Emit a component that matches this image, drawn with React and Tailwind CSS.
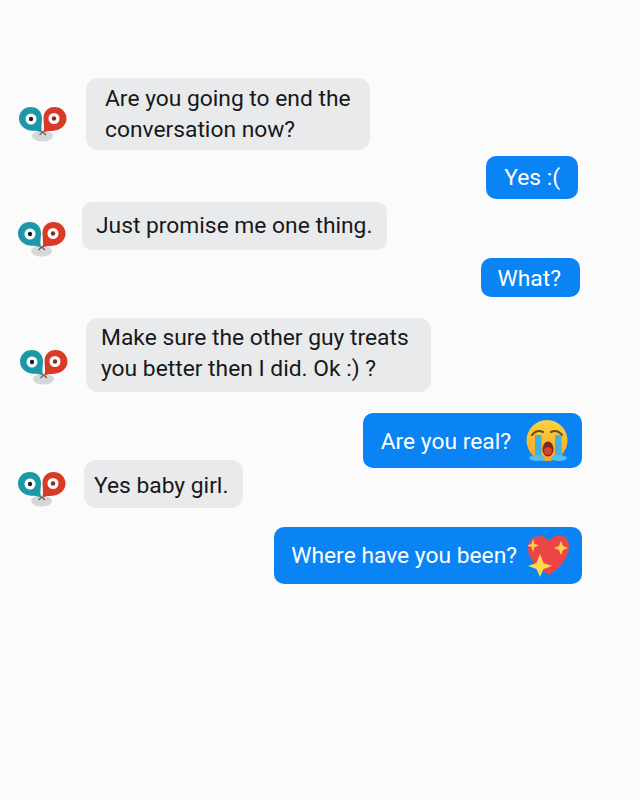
function Avatar({ className }) {
  return (
    <svg width="50" height="40" viewBox="0 0 50 40" className={"shrink-0 " + className}>
      <ellipse cx="24.500" cy="31" rx="10.500" ry="5.500" fill="#d6d7d8" />
      <path d="M24.500 28 C21 25.500 17 26.300 12.500 25.500 C5.500 24.300 1 19.500 1 13.500 C1 6.800 6.300 2 12.800 2 C19.500 2 24 6.800 24 13 C24 18.500 22.500 23.500 24.500 28 Z" fill="#1d98a8" />
      <path d="M25 28 C28.500 25.500 32.500 26.300 37 25.500 C44 24.300 48.500 19.500 48.500 13.500 C48.500 6.800 43 2 36.500 2 C30 2 25.500 6.800 25.500 13 C25.500 18.500 27 23.500 25 28 Z" fill="#d93a26" />
      <path d="M21.500 30 L24.700 27 L28 30" fill="none" stroke="#7a4a44" strokeWidth="1.100" />
      <circle cx="13" cy="14" r="5.500" fill="#fff" />
      <circle cx="13" cy="14" r="2.200" fill="#15202b" />
      <circle cx="36" cy="13.500" r="5.500" fill="#fff" />
      <circle cx="36" cy="13.500" r="2.200" fill="#8a2a20" />
    </svg>
  );
}

function CryEmoji() {
  return (
    <svg width="42" height="42" viewBox="0 0 42 42" className="shrink-0">
      <defs>
        <linearGradient id="cry" x1="0" y1="0" x2="0" y2="1">
          <stop offset="0" stopColor="#fdd23f" />
          <stop offset="1" stopColor="#f6a623" />
        </linearGradient>
      </defs>
      <circle cx="21" cy="20.500" r="20.500" fill="url(#cry)" />
      <path d="M6 15 Q11 9 17 12 M25 12 Q31 9 36 15" fill="none" stroke="#6b4a1c" strokeWidth="2" strokeLinecap="round" />
      <ellipse cx="22" cy="29" rx="5.500" ry="7.500" fill="#7a2a1c" />
      <ellipse cx="22" cy="31" rx="4" ry="4" fill="#d9432f" />
      <path d="M9 15 H15.500 V37 H9 Z" fill="#3fb2e3" />
      <path d="M29 15 H35.500 V37 H29 Z" fill="#3fb2e3" />
      <ellipse cx="11" cy="38" rx="8" ry="3" fill="#55c0ea" />
      <ellipse cx="33" cy="38" rx="8" ry="3" fill="#55c0ea" />
    </svg>
  );
}

function HeartEmoji() {
  return (
    <svg width="42" height="42" viewBox="0 0 42 42" className="shrink-0">
      <path d="M22 40 C14 34 1 26 1 13 C1 5 7 1 13 1 C17 1 20 3 22 6 C25 2 29 0.500 33 0.500 C39 0.500 42 6 42 12 C42 24 31 34 22 40 Z" fill="#ec4646" />
      <path d="M6 4 L7.500 9 L12 10.500 L7.500 12 L6 17 L4.500 12 L0 10.500 L4.500 9 Z" fill="#fbd24e" />
      <path d="M34 6 L36 11 L41 13 L36 15 L34 20 L32 15 L27 13 L32 11 Z" fill="#fbd24e" />
      <path d="M13 19 L16.500 28 L25 31 L16.500 34 L13 42 L9.500 34 L1 31 L9.500 28 Z" fill="#fcd94f" />
    </svg>
  );
}

function Received({ children, className, bubble, avatar }) {
  return (
    <div className={"flex items-center " + className}>
      <Avatar className={avatar} />
      <div className={"bg-[#e9eaec] text-[#17181a] text-[22.8px] leading-[31px] " + bubble}>{children}</div>
    </div>
  );
}

function Sent({ children, className }) {
  return (
    <div className="flex justify-end">
      <div className={"flex items-center bg-[#0a84f5] text-white text-[22.8px] leading-[31px] " + className}>{children}</div>
    </div>
  );
}

export default function App() {
  return (
    <div className="w-[640px] h-[800px] overflow-hidden bg-[#fbfbfc] pt-[78px] font-['Roboto',sans-serif] flex flex-col">
      <Received className="ml-[18px] gap-[18px]" avatar="translate-y-[11px]" bubble="rounded-[12px] pl-[19px] pr-[10px] py-[5px] w-[284px]">
        <p>Are you going to end the conversation now?</p>
      </Received>
      <Sent className="mt-[6px] mr-[62px] rounded-[10px] pl-[18px] pr-[18px] h-[43px]">Yes :(</Sent>
      <Received className="mt-[3px] ml-[17px] gap-[15px]" avatar="translate-y-[14px]" bubble="rounded-[10px] px-[14px] py-[8px] h-[48px] w-[305px]">
        <p>Just promise me one thing.</p>
      </Received>
      <Sent className="mt-[8px] mr-[60px] rounded-[10px] pl-[17px] pr-[19px] pt-[2px] h-[39px]">What?</Sent>
      <Received className="mt-[21px] ml-[19px] gap-[17px]" avatar="translate-y-[13px]" bubble="rounded-[12px] pl-[15px] pr-[10px] py-[4px] h-[74px] w-[345px]">
        <p>Make sure the other guy treats you better then I did. Ok :) ?</p>
      </Received>
      <Sent className="mt-[21px] mr-[58px] rounded-[10px] pl-[18px] pr-[14px] pt-[1px] h-[55px] gap-[15px]">
        <span>Are you real?</span>
        <CryEmoji />
      </Sent>
      <Received className="-mt-[8px] ml-[17px] gap-[17px]" avatar="translate-y-[6px]" bubble="rounded-[12px] px-[10px] pt-[10px] h-[48px] w-[159px]">
        <p>Yes baby girl.</p>
      </Received>
      <Sent className="mt-[19px] mr-[58px] rounded-[10px] pl-[17px] pr-[13px] h-[57px] gap-[10px]">
        <span>Where have you been?</span>
        <HeartEmoji />
      </Sent>
    </div>
  );
}
